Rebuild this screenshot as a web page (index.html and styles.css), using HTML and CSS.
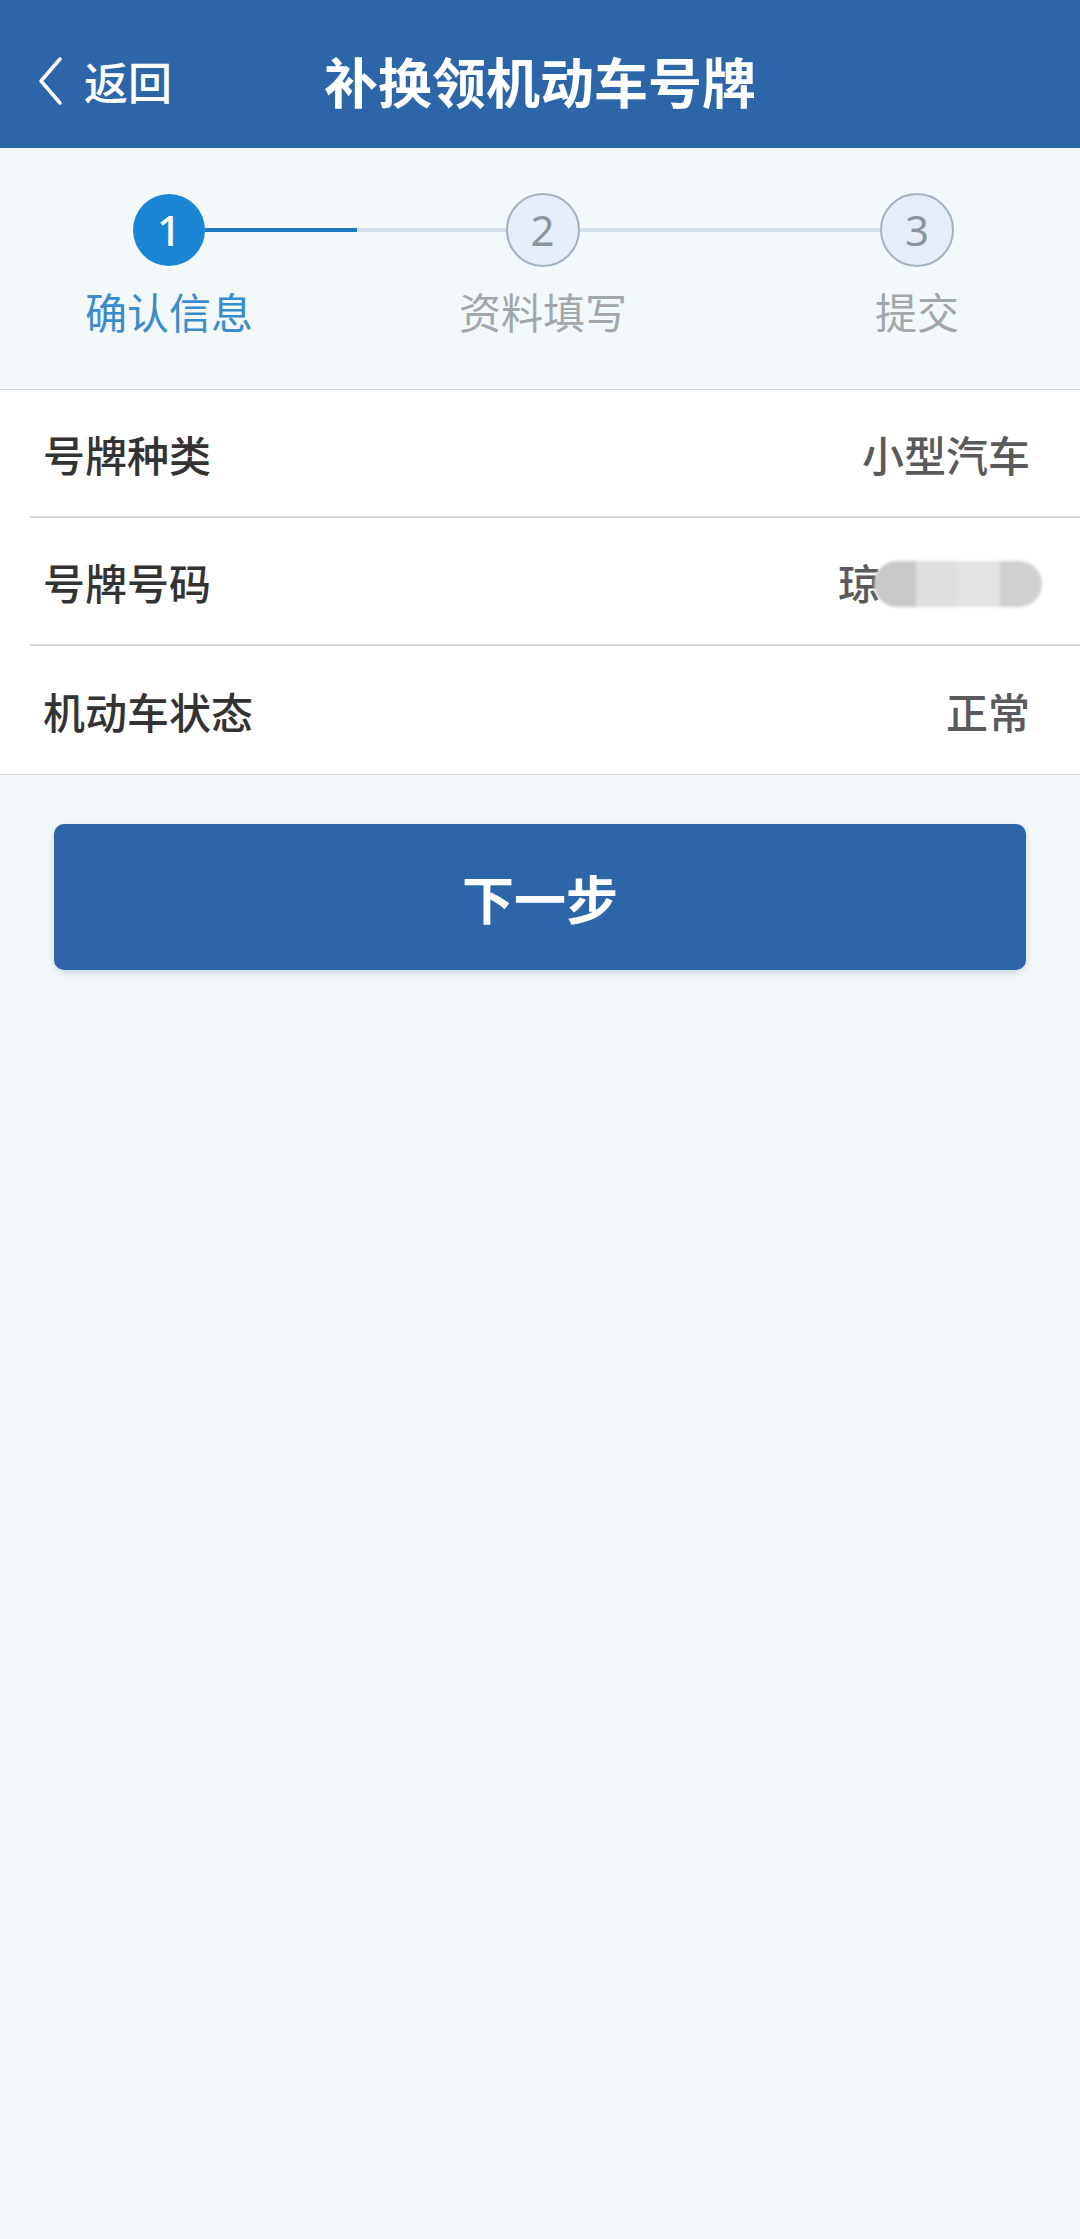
FILE: index.html
```html
<!DOCTYPE html>
<html lang="zh-CN">
<head>
<meta charset="utf-8">
<title>补换领机动车号牌</title>
<link rel="stylesheet" href="styles.css">
</head>
<body>
<header class="topbar">
  <div class="back">
    <svg class="chev" viewBox="0 0 28 50" width="28" height="50"><path d="M24 3 L5 25 L24 47" fill="none" stroke="#fff" stroke-width="3.5" stroke-linecap="round" stroke-linejoin="round"/></svg>
    <span class="back-text">返回</span>
  </div>
  <h1 class="title">补换领机动车号牌</h1>
  <div></div>
</header>

<section class="steps">
  <div class="track">
    <div class="dot dot-active">1</div>
    <div class="line line-partial"></div>
    <div class="dot">2</div>
    <div class="line"></div>
    <div class="dot">3</div>
  </div>
  <div class="labels">
    <span class="label label-active">确认信息</span>
    <span class="label">资料填写</span>
    <span class="label">提交</span>
  </div>
</section>

<section class="info">
  <div class="row">
    <span class="key">号牌种类</span>
    <span class="val">小型汽车</span>
  </div>
  <div class="row">
    <span class="key">号牌号码</span>
    <span class="val plate">琼<span class="blob"><i></i><i></i><i></i><i></i></span></span>
  </div>
  <div class="row">
    <span class="key">机动车状态</span>
    <span class="val">正常</span>
  </div>
</section>

<div class="actions">
  <button class="next">下一步</button>
</div>
</body>
</html>
```

FILE: styles.css
```css
* { box-sizing: border-box; }
html, body {
  margin: 0;
  padding: 0;
}
body {
  width: 1080px;
  min-height: 2239px;
  background: #f3f8fa;
  font-family: "Noto Sans CJK SC", "Noto Sans", sans-serif;
}
.topbar {
  height: 148px;
  padding-top: 14px;
  background: #2d66a8;
  display: grid;
  grid-template-columns: 1fr auto 1fr;
  align-items: center;
  color: #fff;
}
.back {
  display: flex;
  align-items: center;
  padding-left: 36px;
  gap: 20px;
}
.chev { display: block; }
.back-text {
  font-size: 44px;
  font-weight: 500;
  line-height: 1;
}
.title {
  margin: 0;
  font-size: 54px;
  font-weight: 700;
  line-height: 1;
  letter-spacing: 0;
}
.steps {
  padding: 45px 0 48px;
  border-bottom: 1px solid #d3d8dc;
  background: #f3f8fa;
}
.track {
  display: flex;
  align-items: center;
  padding: 0 126px 0 133px;
}
.dot {
  width: 74px;
  height: 74px;
  flex: none;
  border-radius: 50%;
  border: 2px solid #a3b2c0;
  background: #e5eef8;
  color: #8b949c;
  font-family: "Noto Sans", sans-serif;
  font-size: 42px;
  display: flex;
  align-items: center;
  justify-content: center;
  line-height: 1;
}
.dot-active {
  width: 72px;
  height: 72px;
  border: none;
  background: #1b86d6;
  color: #fff;
  font-weight: 500;
}
.line {
  flex: 1;
  height: 4px;
  background: #d3dfe9;
}
.line-partial {
  background: linear-gradient(to right, #1f78c1 0, #1f78c1 152px, #d3dfe9 152px);
}
.labels {
  display: flex;
  gap: 74px;
  padding-left: 19px;
  margin-top: 14px;
}
.label {
  width: 300px;
  text-align: center;
  font-size: 42px;
  line-height: 60px;
  color: #a2a7ac;
}
.label-active { color: #3a8ccc; }
.info {
  background: #fff;
  border-bottom: 1px solid #d3d8dc;
  padding-left: 30px;
}
.row {
  height: 128px;
  display: flex;
  align-items: center;
  justify-content: space-between;
  padding: 0 50px 0 13px;
  border-bottom: 2px solid #d6d9dc;
}
.row:last-child { border-bottom: none; }
.key {
  font-size: 42px;
  font-weight: 500;
  color: #333;
}
.val {
  font-size: 42px;
  font-weight: 500;
  color: #5a5a5a;
}
.plate {
  display: flex;
  align-items: center;
}
.blob {
  display: flex;
  width: 168px;
  height: 46px;
  margin-left: -6px;
  margin-right: -12px;
  margin-top: 6px;
  border-radius: 23px;
  overflow: hidden;
  filter: blur(1.5px);
}
.blob i { flex: 1; }
.blob i:nth-child(1) { background: #c9c9c9; }
.blob i:nth-child(2) { background: #dedede; }
.blob i:nth-child(3) { background: #e3e3e3; }
.blob i:nth-child(4) { background: #d0d0d0; }
.actions {
  padding: 49px 54px 0;
}
.next {
  display: block;
  width: 100%;
  height: 146px;
  border: none;
  border-radius: 10px;
  background: #2d66a8;
  color: #fff;
  font-family: "Noto Sans CJK SC", sans-serif;
  font-size: 52px;
  font-weight: 700;
  box-shadow: 0 3px 6px rgba(60, 100, 150, 0.2);
}
```
